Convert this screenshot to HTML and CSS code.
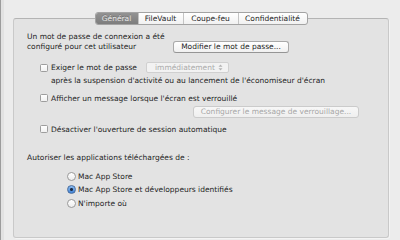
FILE: index.html
```html
<!DOCTYPE html>
<html lang="fr">
<head>
<meta charset="utf-8">
<title>Sécurité et confidentialité</title>
<link rel="stylesheet" href="styles.css">
</head>
<body>
<div class="window">
  <div class="group">
    <div class="tabs">
      <span class="tab tab-general selected">Général</span>
      <span class="tab tab-filevault">FileVault</span>
      <span class="tab tab-firewall">Coupe-feu</span>
      <span class="tab tab-privacy">Confidentialité</span>
    </div>
    <div class="content">
      <div class="login-row">
        <p class="login-text">Un mot de passe de connexion a été<br>configuré pour cet utilisateur</p>
        <span class="btn">Modifier le mot de passe...</span>
      </div>
      <div class="check-row row-require">
        <span class="checkbox"></span>
        <span class="label">Exiger le mot de passe</span>
        <span class="popup">immédiatement
          <svg class="arrows" width="5" height="7" viewBox="0 0 5 7"><path d="M0.5 2.8 L2.5 0.6 L4.5 2.8 Z M0.5 4.2 L2.5 6.4 L4.5 4.2 Z" fill="#b4b4b4"/></svg>
        </span>
      </div>
      <div class="sub-text">après la suspension d'activité ou au lancement de l'économiseur d'écran</div>
      <div class="check-row row-message">
        <span class="checkbox"></span>
        <span class="label">Afficher un message lorsque l'écran est verrouillé</span>
      </div>
      <div class="btn-row">
        <span class="btn disabled btn-lock">Configurer le message de verrouillage...</span>
      </div>
      <div class="check-row row-auto">
        <span class="checkbox"></span>
        <span class="label">Désactiver l'ouverture de session automatique</span>
      </div>
      <div class="section-title">Autoriser les applications téléchargées de :</div>
      <div class="radios">
        <div class="radio-row"><span class="radio"></span><span class="label">Mac App Store</span></div>
        <div class="radio-row"><span class="radio checked"></span><span class="label">Mac App Store et développeurs identifiés</span></div>
        <div class="radio-row"><span class="radio"></span><span class="label">N'importe où</span></div>
      </div>
    </div>
  </div>
</div>
</body>
</html>
```
FILE: styles.css
```css
html, body {
  margin: 0;
  padding: 0;
}
body {
  width: 400px;
  height: 240px;
  overflow: hidden;
  background: #ececec;
  font-family: "DejaVu Sans", "Liberation Sans", sans-serif;
  font-size: 7.5px;
  color: #1e1e1e;
}
.window {
  box-sizing: border-box;
  width: 400px;
  height: 240px;
  border-left: 1px solid #9c9c9c;
  background: linear-gradient(to right, #e2e2e2 0, #e2e2e2 3px, #ececec 3px);
  padding: 18px 0 0 12px;
}
.group {
  box-sizing: border-box;
  width: 376px;
  height: 220px;
  background: #e3e3e3;
  border: 1px solid #c9c9c9;
  border-top-color: #b4b4b4;
  border-radius: 3px;
  box-shadow: 1px 1px 0 #f4f4f4;
}
.tabs {
  display: flex;
  width: 213px;
  height: 13px;
  margin: -7px auto 0;
  box-sizing: border-box;
  border: 1px solid #a3a3a3;
  border-radius: 3px;
  background: linear-gradient(#ffffff, #f1f1f1);
  overflow: hidden;
}
.tab {
  box-sizing: border-box;
  height: 11px;
  line-height: 11px;
  text-align: center;
  color: #1e1e1e;
  border-left: 1px solid #c4c4c4;
}
.tab:first-child { border-left: none; }
.tab-general { width: 42px; }
.tab-filevault { width: 45px; }
.tab-firewall { width: 55px; }
.tab-privacy { flex: 1; }
.tab.selected {
  background: linear-gradient(#939393, #7d7d7d);
  color: #e9e9e9;
  text-shadow: 0 -1px 0 rgba(0,0,0,0.25);
}
.content {
  padding: 7px 0 0 13px;
}
.login-row {
  display: flex;
  align-items: flex-start;
}
.login-text {
  margin: 0;
  width: 146px;
  line-height: 9.5px;
}
.btn {
  display: block;
  box-sizing: border-box;
  height: 12px;
  line-height: 10px;
  text-align: center;
  background: linear-gradient(#ffffff, #f0f0f0);
  border: 1px solid #a9a9a9;
  border-bottom-color: #959595;
  border-radius: 3px;
  white-space: nowrap;
}
.login-row .btn {
  width: 116px;
  margin-top: 9px;
}
.btn.disabled {
  color: #a7a7a7;
  background: linear-gradient(#f7f7f7, #efefef);
  border-color: #cbcbcb;
}
.check-row {
  display: flex;
  align-items: center;
  height: 11px;
  padding-left: 13px;
}
.checkbox {
  box-sizing: border-box;
  width: 8px;
  height: 8px;
  flex: none;
  background: linear-gradient(#ffffff, #f1f1f1);
  border: 1px solid #9d9d9d;
  border-radius: 1.5px;
  margin-right: 3px;
}
.label {
  white-space: nowrap;
  line-height: 11px;
}
.row-require {
  margin-top: 9px;
}
.row-require .label {
  width: 95px;
}
.popup {
  box-sizing: border-box;
  display: flex;
  align-items: center;
  justify-content: space-between;
  width: 83px;
  height: 11px;
  padding: 0 5px 0 8px;
  color: #ababab;
  background: #f2f2f2;
  border: 1px solid #d0d0d0;
  border-radius: 2px;
  line-height: 9px;
}
.sub-text {
  margin-top: 3px;
  padding-left: 24px;
  line-height: 9.5px;
  white-space: nowrap;
}
.row-message {
  margin-top: 7px;
}
.btn-row {
  margin-top: 2px;
  padding-left: 166px;
}
.btn-lock {
  width: 166px;
}
.row-auto {
  margin-top: 6px;
}
.section-title {
  margin-top: 18px;
  line-height: 9.5px;
}
.radios {
  margin-top: 8px;
  padding-left: 40px;
}
.radio-row {
  display: flex;
  align-items: center;
  height: 13.3px;
}
.radio {
  box-sizing: border-box;
  width: 9px;
  height: 9px;
  flex: none;
  border-radius: 50%;
  background: linear-gradient(#ffffff, #ededed);
  border: 1px solid #9a9a9a;
  margin-right: 2px;
}
.radio.checked {
  background: radial-gradient(circle, #1b2a44 0, #1b2a44 1.3px, transparent 1.6px), linear-gradient(#8cbcf0, #3f82d6);
  border-color: #4a6e9e;
}
```
